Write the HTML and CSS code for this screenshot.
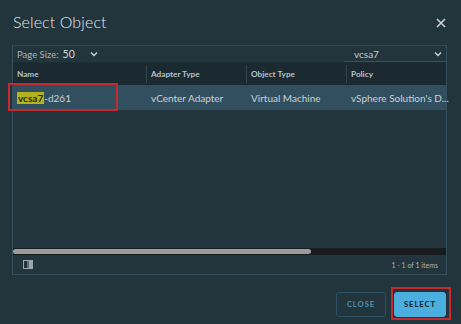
FILE: index.html
```html
<!DOCTYPE html>
<html lang="en">
<head>
  <meta charset="UTF-8"/>
  <title>Select Object</title>
  <link rel="stylesheet" href="styles.css">
</head>
<body>
  <div class="modal">
    <div class="modal-head">
      <h1>Select Object</h1>
      <svg class="close-x" width="10" height="10" viewBox="0 0 10 10"><path d="M1 1L9 9M9 1L1 9" stroke="#c9d1d5" stroke-width="1.6"/></svg>
    </div>

    <div class="grid">
      <div class="toolbar">
        <span class="ps-label">Page Size:</span>
        <span class="ps-select">50
          <svg width="8" height="6" viewBox="0 0 8 6"><path d="M1 1.5L4 4.5L7 1.5" stroke="#c9d1d5" stroke-width="1.4" fill="none"/></svg>
        </span>
        <span class="filter">vcsa7
          <svg width="8" height="6" viewBox="0 0 8 6"><path d="M1 1.5L4 4.5L7 1.5" stroke="#c9d1d5" stroke-width="1.4" fill="none"/></svg>
        </span>
      </div>
      <div class="thead">
        <div class="th c1">Name</div>
        <div class="th c2">Adapter Type</div>
        <div class="th c3">Object Type</div>
        <div class="th c4">Policy</div>
      </div>
      <div class="tr selected">
        <div class="td c1"><mark>vcsa7</mark>-d261<span class="callout row-callout"></span></div>
        <div class="td c2">vCenter Adapter</div>
        <div class="td c3">Virtual Machine</div>
        <div class="td c4">vSphere Solution's D...</div>
      </div>
      <div class="tbody-empty"></div>
      <div class="hscroll"><div class="thumb"></div></div>
      <div class="grid-foot">
        <svg width="10" height="9" viewBox="0 0 10 9"><rect x="0.5" y="0.5" width="9" height="8" fill="none" stroke="#9aa6ac"/><line x1="5" y1="0.5" x2="5" y2="8.5" stroke="#9aa6ac"/><rect x="6" y="1" width="3" height="7" fill="#9aa6ac"/></svg>
        <span class="count">1 - 1 of 1 items</span>
      </div>
    </div>

    <div class="actions">
      <button class="btn btn-outline">CLOSE</button>
      <button class="btn btn-primary">SELECT<span class="callout btn-callout"></span></button>
    </div>
  </div>
</body>
</html>
```

FILE: styles.css
```css
body { margin:0; background:#22343c; font-family:Lato, "Open Sans", sans-serif; color:#c9d1d5; width:461px; height:324px; overflow:hidden; }
.modal { padding:0 14px 0 12px; }
.modal-head { display:flex; justify-content:space-between; align-items:center; height:45px; }
.modal-head h1 { margin:0 0 0 1px; font-weight:300; font-size:16px; color:#e1e6e9; letter-spacing:0.1px; position:relative; top:-1px; }
.close-x { margin-right:1px; position:relative; top:0; }

.grid { border:1px solid #34505d; border-top-color:#2e4652; width:433px; }
.toolbar { display:flex; align-items:center; height:16px; font-size:9.5px; padding-left:4px; color:#aab5bb; border-bottom:1px solid #1d2d34; }
.ps-label { margin-right:4px; }
.ps-select { display:flex; align-items:center; gap:15px; font-size:10.5px; color:#d0d7db; width:38px; }
.filter { margin-left:auto; width:88px; display:flex; justify-content:space-between; align-items:center; font-size:10px; padding-left:10px; padding-right:4px; color:#c3ccd1; border-bottom:1px solid #3a5260; height:15px; }

.thead, .tr { display:flex; }
.thead { background:#1b2a31; height:22px; align-items:center; }
.th { font-size:8.2px; font-weight:700; color:#b8c2c7; padding-left:4px; height:18px; line-height:18px; border-left:1px solid #34474f; box-sizing:border-box; }
.th.c1 { border-left:none; }
.c1 { width:133px; }
.c2 { width:100px; }
.c3 { width:100px; }
.c4 { width:100px; }
.tr.selected { background:#324f5f; height:25px; align-items:center; }
.td { font-size:10px; color:#c9d2d7; padding-left:4px; box-sizing:border-box; white-space:nowrap; position:relative; }
.td.c2, .td.c3, .td.c4 { padding-left:5px; }
mark { background:#b4b21f; color:#1f2a10; font-weight:700; padding:0 1px; }
.tbody-empty { height:138px; }
.hscroll { height:7px; background:#181c1e; display:flex; align-items:center; }
.thumb { width:298px; height:5px; background:#9a9c9d; border-radius:3px; }
.grid-foot { display:flex; align-items:center; justify-content:space-between; height:19px; padding:0 8px 0 10px; }
.count { font-size:7px; color:#aab5bb; }

.actions { display:flex; justify-content:flex-end; gap:8px; margin-top:17px; padding-right:1px; }
.btn { height:25px; font-family:inherit; font-size:7.5px; font-weight:900; letter-spacing:1px; border-radius:3px; cursor:pointer; position:relative; }
.btn-outline { width:50px; background:transparent; border:1px solid #2a5166; color:#4b8aa7; }
.btn-primary { width:52px; background:#4aafde; border:1px solid #4aafde; color:#1b2b36; }

.callout { position:absolute; border:2px solid #c72a2e; pointer-events:none; }
.row-callout { left:-5px; top:-9px; width:106px; height:24px; }
.btn-callout { left:-4px; top:-6px; width:56px; height:29px; }
```
